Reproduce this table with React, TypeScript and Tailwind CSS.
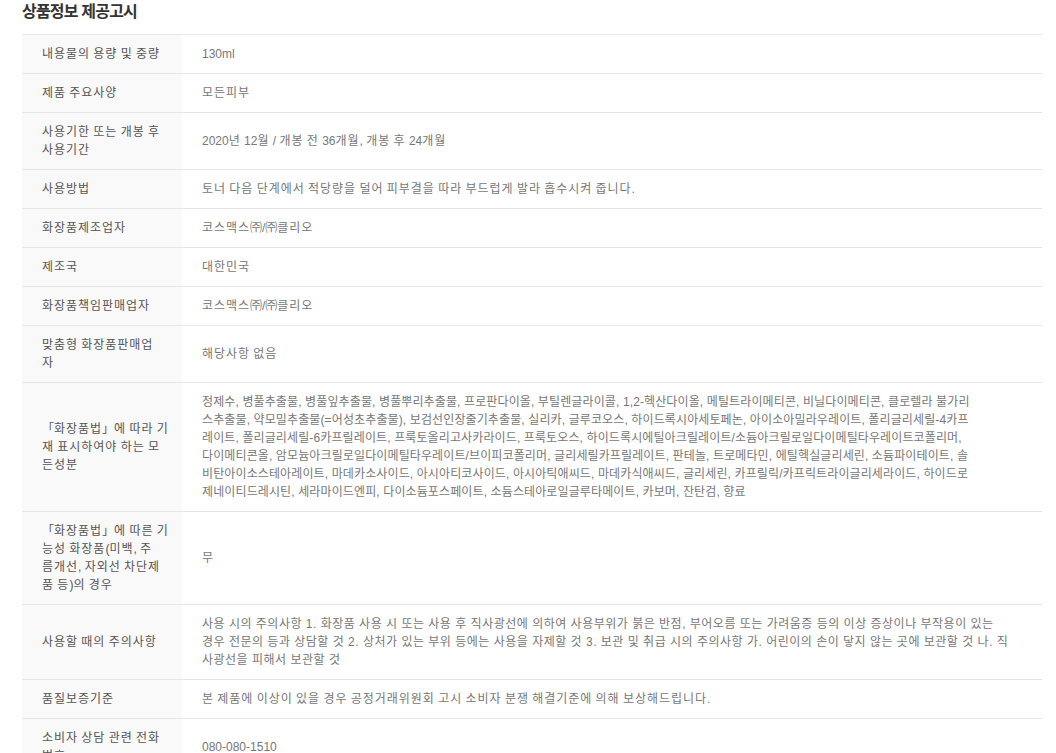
import React from "react";

type Row = { label: string[]; value: string[]; plain?: string };

const rows: Row[] = [
  { label: ["내용물의 용량 및 중량"], value: ["130ml"] },
  { label: ["제품 주요사양"], value: ["모든피부"] },
  { label: ["사용기한 또는 개봉 후", "사용기간"], value: ["2020년 12월 / 개봉 전 36개월, 개봉 후 24개월"] },
  { label: ["사용방법"], value: ["토너 다음 단계에서 적당량을 덜어 피부결을 따라 부드럽게 발라 흡수시켜 줍니다."] },
  { label: ["화장품제조업자"], value: ["코스맥스㈜/㈜클리오"] },
  { label: ["제조국"], value: ["대한민국"] },
  { label: ["화장품책임판매업자"], value: ["코스맥스㈜/㈜클리오"] },
  { label: ["맞춤형 화장품판매업", "자"], value: ["해당사항 없음"] },
  {
    label: ["「화장품법」에 따라 기", "재 표시하여야 하는 모", "든성분"],
    plain: "tracking-[0.12px]",
    value: [
      "정제수, 병풀추출물, 병풀잎추출물, 병풀뿌리추출물, 프로판다이올, 부틸렌글라이콜, 1,2-헥산다이올, 메틸트라이메티콘, 비닐다이메티콘, 클로렐라 불가리",
      "스추출물, 약모밀추출물(=어성초추출물), 보검선인장줄기추출물, 실리카, 글루코오스, 하이드록시아세토페논, 아이소아밀라우레이트, 폴리글리세릴-4카프",
      "레이트, 폴리글리세릴-6카프릴레이트, 프룩토올리고사카라이드, 프룩토오스, 하이드록시에틸아크릴레이트/소듐아크릴로일다이메틸타우레이트코폴리머,",
      "다이메티콘올, 암모늄아크릴로일다이메틸타우레이트/브이피코폴리머, 글리세릴카프릴레이트, 판테놀, 트로메타민, 에틸헥실글리세린, 소듐파이테이트, 솔",
      "비탄아이소스테아레이트, 마데카소사이드, 아시아티코사이드, 아시아틱애씨드, 마데카식애씨드, 글리세린, 카프릴릭/카프릭트라이글리세라이드, 하이드로",
      "제네이티드레시틴, 세라마이드엔피, 다이소듐포스페이트, 소듐스테아로일글루타메이트, 카보머, 잔탄검, 향료",
    ],
  },
  {
    label: ["「화장품법」에 따른 기", "능성 화장품(미백, 주", "름개선, 자외선 차단제", "품 등)의 경우"],
    value: ["무"],
  },
  {
    label: ["사용할 때의 주의사항"],
    plain: "tracking-[0.5px]",
    value: [
      "사용 시의 주의사항 1. 화장품 사용 시 또는 사용 후 직사광선에 의하여 사용부위가 붉은 반점, 부어오름 또는 가려움증 등의 이상 증상이나 부작용이 있는",
      "경우 전문의 등과 상담할 것 2. 상처가 있는 부위 등에는 사용을 자제할 것 3. 보관 및 취급 시의 주의사항 가. 어린이의 손이 닿지 않는 곳에 보관할 것 나. 직",
      "사광선을 피해서 보관할 것",
    ],
  },
  { label: ["품질보증기준"], value: ["본 제품에 이상이 있을 경우 공정거래위원회 고시 소비자 분쟁 해결기준에 의해 보상해드립니다."] },
  { label: ["소비자 상담 관련 전화", "번호"], value: ["080-080-1510"] },
];

function Wide({ text }: { text: string }) {
  const parts = text.split(/([\uAC00-\uD7A3]+)/);
  return (
    <>
      {parts.map((p, i) =>
        /[\uAC00-\uD7A3]/.test(p) ? (
          <span key={i} className="tracking-[0.96px]">{p}</span>
        ) : (
          <React.Fragment key={i}>{p}</React.Fragment>
        )
      )}
    </>
  );
}

export default function App() {
  return (
    <div
      className="w-[1056px] h-[753px] overflow-hidden bg-white"
      style={{ fontFamily: '"Liberation Sans", "Noto Sans CJK KR", sans-serif' }}
    >
      <div className="pl-[22px] pr-[14px]">
        <h2 className="text-[16px] leading-[22px] font-bold tracking-[-0.8px] text-[#333] pt-[1px] h-[34px]">상품정보 제공고시</h2>
        <div className="border-t border-[#e6e6e6]">
          {rows.map((r, i) => (
            <div key={i} className="flex border-b border-[#e6e6e6]">
              <div className="w-[160px] shrink-0 bg-[#f9f9f9] px-5 py-[10px] flex flex-col justify-center text-[12px] leading-[18px] text-[#555]">
                {r.label.map((l, j) => (
                  <span key={j} className="block whitespace-nowrap">
                    <Wide text={l} />
                  </span>
                ))}
              </div>
              <div className="flex-1 px-5 py-[10px] flex flex-col justify-center text-[12px] leading-[18px] text-[#777]">
                {r.value.map((l, j) =>
                  r.plain ? (
                    <span key={j} className={`block whitespace-nowrap ${r.plain}`}>{l}</span>
                  ) : (
                    <span key={j} className="block whitespace-nowrap">
                      <Wide text={l} />
                    </span>
                  )
                )}
              </div>
            </div>
          ))}
        </div>
      </div>
    </div>
  );
}
